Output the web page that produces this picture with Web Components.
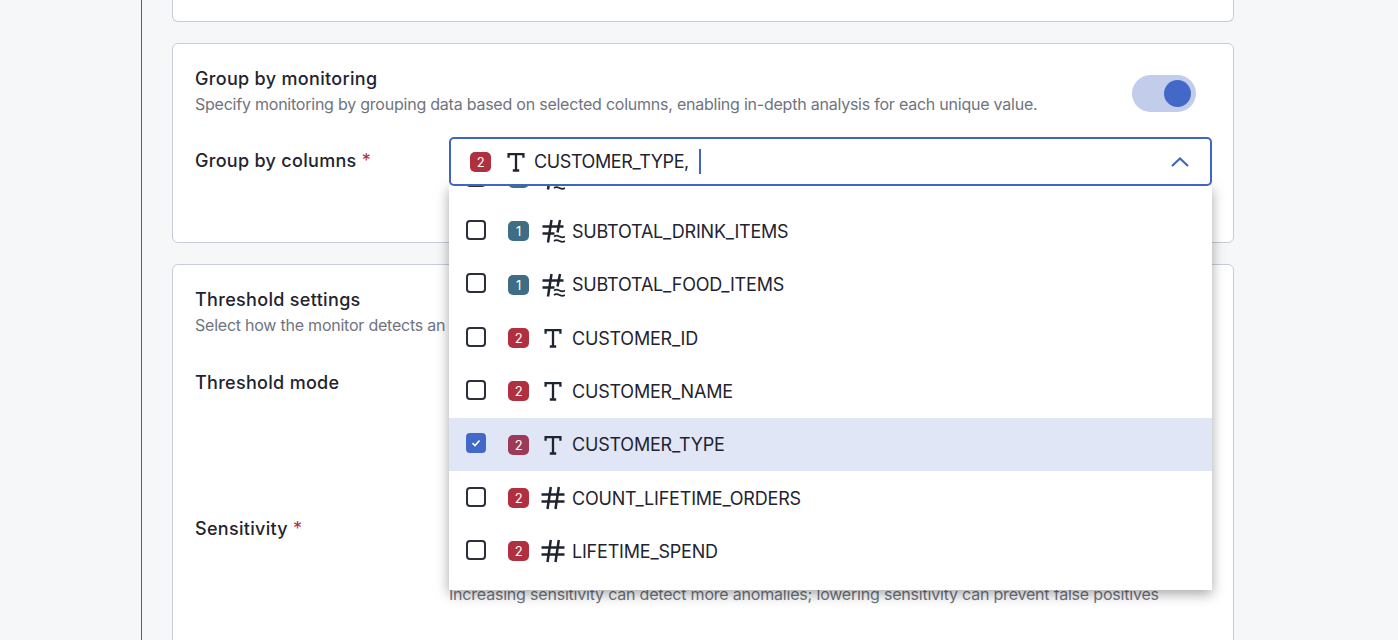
<!DOCTYPE html>
<html><head><meta charset="utf-8">
<style>
html,body{margin:0;height:640px;overflow:hidden;background:#f6f7f9;font-family:Inter,"Liberation Sans",sans-serif;color:#1f2430}
</style></head><body>
<x-shell>
  <x-card style="height:22px;padding:0;border-top:0;border-radius:0 0 6px 6px"></x-card>
  <x-card style="height:200px">
    <x-head title-text="Group by monitoring" desc="Specify monitoring by grouping data based on selected columns, enabling in-depth analysis for each unique value."><x-toggle slot="end"></x-toggle></x-head>
    <x-field label="Group by columns" required style="margin-top:21px"><x-select>
      <x-option slot="options" kind="approx" badge="1" clipped></x-option>
      <x-option slot="options" kind="approx" badge="1">SUBTOTAL_DRINK_ITEMS</x-option>
      <x-option slot="options" kind="approx" badge="1">SUBTOTAL_FOOD_ITEMS</x-option>
      <x-option slot="options" kind="text" badge="2">CUSTOMER_ID</x-option>
      <x-option slot="options" kind="text" badge="2">CUSTOMER_NAME</x-option>
      <x-option slot="options" kind="text" badge="2" selected>CUSTOMER_TYPE</x-option>
      <x-option slot="options" kind="hash" badge="2">COUNT_LIFETIME_ORDERS</x-option>
      <x-option slot="options" kind="hash" badge="2">LIFETIME_SPEND</x-option>
    </x-select></x-field>
  </x-card>
  <x-card style="height:420px">
    <x-head title-text="Threshold settings" desc="Select how the monitor detects an"></x-head>
    <x-field label="Threshold mode" style="height:146px;margin-top:22px"></x-field>
    <x-field label="Sensitivity" required><div style="height:77px"></div><x-help>Increasing sensitivity can detect more anomalies; lowering sensitivity can prevent false positives</x-help></x-field>
  </x-card>
</x-shell>
<script>
const def=(name,html,setup)=>customElements.define(name,class extends HTMLElement{
  constructor(){super();this.attachShadow({mode:'open'}).innerHTML=html}
  connectedCallback(){setup&&setup.call(this,this.shadowRoot)}
});
def('x-shell',`<style>:host{display:flex;flex-direction:column;gap:21px;box-sizing:border-box;width:1093px;height:640px;margin-left:141px;padding-left:30px;border-left:1px solid #3b5fbf;overflow:hidden}</style><slot></slot>`);
def('x-card',`<style>:host{display:block;flex:none;width:1062px;box-sizing:border-box;background:#fff;border:1px solid #c9ccd6;border-radius:6px;padding:22px}</style><slot></slot>`);
def('x-head',`<style>:host{display:flex;align-items:center;justify-content:space-between;padding-right:15px}
h3{margin:0;font-size:18px;line-height:26px;font-weight:500;letter-spacing:.32px}
p{margin:0;font-size:16px;line-height:24px;color:#6f7480;white-space:nowrap;letter-spacing:-.23px}</style><div><h3></h3><p></p></div><slot name="end"></slot>`,function(r){r.querySelector('h3').textContent=this.getAttribute('title-text');r.querySelector('p').textContent=this.getAttribute('desc')});
def('x-toggle',`<style>:host{display:flex;justify-content:flex-end;align-items:center;box-sizing:border-box;width:64px;height:37px;margin-top:4px;padding-right:5px;border-radius:19px;background:#c2cdeb;flex:none}
i{display:block;width:27px;height:27px;border-radius:50%;background:#4268c8}</style><i></i>`);
def('x-field',`<style>:host{display:grid;grid-template-columns:254px 763px;align-items:start}
label{font-size:18px;line-height:26px;font-weight:500;padding-top:11px;letter-spacing:.3px}
b{color:#b03040;font-weight:400}</style><label></label><div><slot></slot></div>`,function(r){const l=r.querySelector('label');l.textContent=this.getAttribute('label');if(this.hasAttribute('required')){l.insertAdjacentHTML('beforeend',' <b>*</b>')}});
def('x-help',`<style>:host{display:block;font-size:16px;line-height:24px;color:#6f7480;white-space:nowrap;letter-spacing:-.2px}</style><slot></slot>`);
const icon={
 text:`<path d="M4.600 7.800V4.200h14.800v3.600M12 4.200V20.500M8.800 20.500h6.400" fill="none" stroke="#1f2430" stroke-width="2.300"/>`,
 hash:`<path d="M.5 8.500h23M.5 15.500h23M9.800 1 6.500 23M17.800 1 14.500 23" fill="none" stroke="#1f2430" stroke-width="2.500"/>`,
 approx:`<path d="M1.500 7.500h21M1.500 14.500h12M10.500 1 7 23.500M19 1 16.500 13.500" fill="none" stroke="#1f2430" stroke-width="2.500"/><path d="M13 17.500q2.200-1.600 5.500 0t5.500 0M13 22q2.200-1.600 5.500 0t5.500 0" fill="none" stroke="#1f2430" stroke-width="1.700"/>`};
def('x-type',`<style>:host{display:block;width:24px;height:24px;flex:none}svg{display:block}</style><svg width="24" height="24" viewBox="0 0 24 24"></svg>`,function(r){r.querySelector('svg').innerHTML=icon[this.getAttribute('kind')]||''});
def('x-badge',`<style>:host{display:flex;align-items:center;justify-content:center;width:21px;height:20px;border-radius:5px;color:#fff;font-size:13px;flex:none;background:var(--bg)}</style><slot></slot>`);
def('x-option',`<style>:host{display:flex;align-items:center;height:53.33px;padding-left:17px;font-size:18px;letter-spacing:-.2px;white-space:nowrap;color:#1f2430}
:host([selected]){background:#e0e6f5}
.c{box-sizing:border-box;width:20px;height:20px;border:2px solid #2a2f3a;border-radius:4px;flex:none;margin:-3px 22px 0 0;display:flex;align-items:center;justify-content:center}
:host([selected]) .c{background:#4268c8;border-color:#4268c8}
.c svg{display:none}:host([selected]) .c svg{display:block}
.ty{margin:0 7px 0 12px;display:block;flex:none}</style>
<span class="c"><svg width="12" height="12" viewBox="0 0 12 12"><path d="M2.500 6.200 5 8.500 9.500 3.500" fill="none" stroke="#fff" stroke-width="1.600"/></svg></span><x-badge></x-badge><span class="ty"></span><slot></slot>`,function(r){
  r.querySelector('.ty').innerHTML=`<x-type kind="${this.getAttribute('kind')}"></x-type>`;
  const b=r.querySelector('x-badge');const n=this.getAttribute('badge');
  if(!this.hasAttribute('clipped'))b.textContent=n;
  b.style.setProperty('--bg',this.hasAttribute('selected')?'#9c3a58':n=='1'?'#3f6d85':'#b03040');
});
def('x-select',`<style>:host{display:block;position:relative;height:49px}
.f{position:relative;z-index:2;box-sizing:border-box;height:49px;border:2px solid #3f66c4;border-radius:5px;background:#fff;display:flex;align-items:center;padding:0 21px 0 19px;font-size:18px;letter-spacing:-.4px}
.t{margin:0 6px 0 13px}.cur{width:2px;height:25px;background:#3f66c4;margin-left:10px}
.chev{margin-left:auto}
.d{position:absolute;z-index:1;left:0;right:0;top:48px;height:405px;background:#fff;box-shadow:0 4px 12px rgba(0,0,0,.35);overflow:hidden}
.s{margin-top:-33.5px}</style>
<div class="f"><x-badge style="--bg:#b03040">2</x-badge><x-type class="t" kind="text"></x-type><span>CUSTOMER_TYPE,</span><span class="cur"></span><svg class="chev" width="18" height="10" viewBox="0 0 18 10"><path d="M1 9 9 1.500 17 9" fill="none" stroke="#3f66c4" stroke-width="2.200"/></svg></div>
<div class="d"><div class="s"><slot name="options"></slot></div></div>`);
</script>
</body></html>
